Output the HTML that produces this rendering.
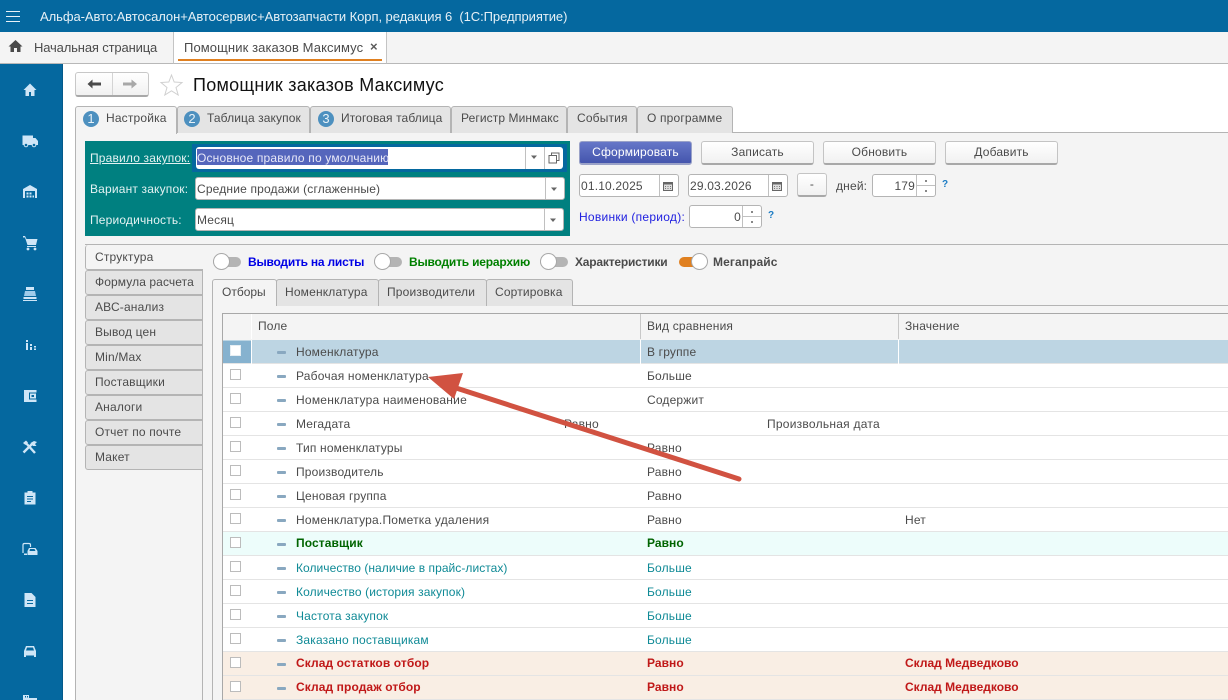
<!DOCTYPE html>
<html lang="ru"><head><meta charset="utf-8"><title>Помощник заказов Максимус</title>
<style>
html,body{margin:0;padding:0;width:1228px;height:700px;overflow:hidden;background:#fff}
body{position:relative;font:12px/16px "Liberation Sans","DejaVu Sans",sans-serif;color:#4b4b4b;letter-spacing:.17px}
div,span,svg{position:absolute;box-sizing:border-box}
.t{white-space:nowrap;height:16px}
.tab{background:#e4e4e4;border:1px solid #b4b4b4;border-bottom:0;border-radius:3px 3px 0 0;top:106px;height:27px}
.ac{background:#f4f4f4}
.num{width:16px;height:16px;border-radius:50%;background:#4d90bf;color:#e8f2f8;font-size:13px;text-align:center;line-height:16px;top:111px;letter-spacing:0}
.st{left:85px;width:118px;height:25px;background:#e4e4e4;border:1px solid #b4b4b4;border-radius:3px 0 0 3px}
.it{top:279px;height:27px;background:#e4e4e4;border:1px solid #b4b4b4;border-bottom:0;border-radius:3px 3px 0 0}
.btn{top:141px;height:24px;width:113px;border:1px solid #c4c4c4;border-bottom:2px solid #a8a8a8;border-radius:3px;background:linear-gradient(#fff,#f1f1f1);text-align:center;line-height:21px;color:#4b4b4b}
.f{background:#fff;border:1px solid #b4b4b4;border-radius:3px}
.row{left:223px;width:1005px;height:24px;border-bottom:1px solid #e4e4e4;background:#fff}
.cb{left:230px;width:11px;height:11px;border:1px solid #bcbcbc;background:#fff}
.dash{left:277px;width:9px;height:3px;border-radius:1px;background:#89a8c0}
.sw{width:28px;height:10px;border-radius:5px;background:#b4b4b4;top:257px}
.kn{width:17px;height:17px;border-radius:50%;background:#fff;border:1px solid #a8a8a8;top:253px}
.b{font-weight:bold}
.r{letter-spacing:.05px}
.ic{left:20px;width:20px;height:20px}
.top{font-size:13px;letter-spacing:0}
.tt{letter-spacing:.1px}
</style></head><body>

<div style="left:0;top:0;width:1228px;height:32px;background:#05689f"></div>
<div style="left:6px;top:11px;width:14px;height:1px;background:#e8f2f8"></div>
<div style="left:6px;top:16px;width:14px;height:1px;background:#e8f2f8"></div>
<div style="left:6px;top:21px;width:14px;height:1px;background:#e8f2f8"></div>
<div class="t top" style="left:40px;top:9px;color:#e6f0f6;white-space:pre;letter-spacing:-.06px">Альфа-Авто:Автосалон+Автосервис+Автозапчасти Корп, редакция 6  (1С:Предприятие)</div>

<div style="left:0;top:32px;width:1228px;height:32px;background:#f4f4f4;border-bottom:1px solid #b8b8b8"></div>
<svg style="left:8px;top:39px" width="15" height="14" viewBox="0 0 15 14"><path d="M7.500 1 L0.500 7.500 H2.500 V13 H6 V9 H9 V13 H12.500 V7.500 H14.500 Z" fill="#4a4a4a"/></svg>
<div class="t top" style="left:34px;top:40px;letter-spacing:-.15px">Начальная страница</div>
<div style="left:173px;top:32px;width:214px;height:32px;background:#fff;border-left:1px solid #c4c4c4;border-right:1px solid #c4c4c4;border-bottom:1px solid #b8b8b8"></div>
<div class="t top" style="left:184px;top:40px;letter-spacing:.1px">Помощник заказов Максимус</div>
<div class="t b" style="left:370px;top:39px;font-size:13px;color:#5a5a5a">×</div>
<div style="left:178px;top:59px;width:204px;height:2px;background:#e08020"></div>

<div style="left:0;top:64px;width:63px;height:636px;background:#05689f;border-right:1px solid #045a8a"></div>
<svg class="ic" style="top:80px" viewBox="0 0 20 20"><path d="M10 3.500 L3.500 10 H5.500 V16 H9 V12 H11 V16 H14.500 V10 H16.500 Z" fill="#cfe6f7"/></svg>
<svg class="ic" style="top:131px" viewBox="0 0 20 20"><path d="M2.500 4.500 H13 V7 H15.500 L18 10 V14 H2.500 Z" fill="#cfe6f7"/><circle cx="6" cy="14" r="1.800" fill="#05689f" stroke="#cfe6f7"/><circle cx="14" cy="14" r="1.800" fill="#05689f" stroke="#cfe6f7"/></svg>
<svg class="ic" style="top:182px" viewBox="0 0 20 20"><path d="M3 7 L10 3 L17 7 V16 H15 V9 H5 V16 H3 Z" fill="#cfe6f7"/><path d="M6.500 10.500h2v2h-2zM9.500 10.500h2v2h-2zM6.500 13.500h2v2h-2zM9.500 13.500h2v2h-2zM12.500 13.500h1.500v2h-1.500z" fill="#cfe6f7"/></svg>
<svg class="ic" style="top:233px" viewBox="0 0 20 20"><path d="M3 3 H5 L6.500 6 H17.500 L16 12 H7.500 L5 4.500 H3 Z" fill="#cfe6f7"/><path d="M7 13.500H16" stroke="#cfe6f7"/><circle cx="8" cy="16" r="1.400" fill="#cfe6f7"/><circle cx="15" cy="16" r="1.400" fill="#cfe6f7"/></svg>
<svg class="ic" style="top:284px" viewBox="0 0 20 20"><path d="M6 3H14V6H6Z" fill="#cfe6f7"/><path d="M5 7H15L16 12H4Z" fill="#9dcbea"/><path d="M3.500 13H16.500V15H3.500ZM3 16H17V17H3Z" fill="#cfe6f7"/></svg>
<svg class="ic" style="top:335px" viewBox="0 0 20 20"><path d="M6 5h2v2H6zM6 8h2v7H6zM10 9h2v2h-2zM10 12h2v3h-2zM14 11h2v1.500h-2zM14 13.500h2V15h-2z" fill="#cfe6f7"/></svg>
<svg class="ic" style="top:386px" viewBox="0 0 20 20"><path d="M4 4H16.500V16H4Z" fill="#cfe6f7"/><path d="M9 6.500H16.500V13.500H9Z" fill="#05689f"/><path d="M10 7.500H16V12.500H10Z" fill="#cfe6f7"/><path d="M11.500 9h2.500v2h-2.500z" fill="#05689f"/></svg>
<svg class="ic" style="top:437px" viewBox="0 0 20 20"><path d="M5 5 L15 16" stroke="#cfe6f7" stroke-width="2.400" fill="none"/><path d="M3.500 15.500 L12 7" stroke="#cfe6f7" stroke-width="2.400" fill="none"/><path d="M10.500 6 L14 4 L17 5 L15 7 L16.500 9 L13 9 Z" fill="#cfe6f7"/><path d="M3 6 L6 3.500 L8 5.500 L5.500 8 Z" fill="#cfe6f7"/></svg>
<svg class="ic" style="top:488px" viewBox="0 0 20 20"><path d="M4.500 4.500H7.500V3H12.500V4.500H15.500V16.500H4.500Z" fill="#cfe6f7"/><path d="M7 8.500H13M7 11H13M7 13.500H11" stroke="#05689f"/></svg>
<svg class="ic" style="top:539px" viewBox="0 0 20 20"><path d="M3 14 V6 Q3 4.500 4.500 4.500 H9 Q10.500 4.500 10.500 6 V8" fill="none" stroke="#cfe6f7" stroke-width="1.200"/><path d="M4 14.500h3v1.500h-3z" fill="#cfe6f7"/><path d="M9 9 H15.500 L17.500 12 V16 H7.500 V12 Z" fill="#cfe6f7"/><path d="M10 10 H14.500 L15.500 12 H9.500 Z" fill="#05689f"/></svg>
<svg class="ic" style="top:590px" viewBox="0 0 20 20"><path d="M4.500 3 H11.500 L15.500 7 V17 H4.500 Z" fill="#cfe6f7"/><path d="M7 10.500H13M7 13.500H13" stroke="#05689f"/></svg>
<svg class="ic" style="top:641px" viewBox="0 0 20 20"><path d="M6 5 H14 L16 10 V16 H14 V14.500 H6 V16 H4 V10 Z" fill="#cfe6f7"/><path d="M7 6.500H13L14 9.500H6Z" fill="#05689f"/></svg>
<svg class="ic" style="top:692px" viewBox="0 0 20 20"><path d="M3 3H9V6H17V20H3Z" fill="#cfe6f7"/><path d="M5 4h1v1.500H5zM7 4h1v1.500H7z" fill="#05689f"/></svg>

<div style="left:75px;top:72px;width:74px;height:25px;border:1px solid #c8c8c8;border-bottom:2px solid #a8a8a8;border-radius:3px;background:linear-gradient(#fff,#f1f1f1)"></div>
<div style="left:112px;top:73px;width:1px;height:22px;background:#d4d4d4"></div>
<svg style="left:86px;top:78px" width="16" height="12" viewBox="0 0 16 12"><path d="M1.500 6 L6.500 1.500 V4.500 H15 V7.500 H6.500 V10.500 Z" fill="#4a4a4a"/></svg>
<svg style="left:122px;top:78px" width="16" height="12" viewBox="0 0 16 12"><path d="M15 6 L9.500 1.500 V4.500 H1 V7.500 H9.500 V10.500 Z" fill="#a8a8a8"/></svg>
<svg style="left:159px;top:73px" width="25" height="24" viewBox="0 0 25 24"><path d="M12.500 2 L15.200 9 L23 9.500 L17 14.500 L19.200 22 L12.500 17.800 L5.800 22 L8 14.500 L2 9.500 L9.800 9 Z" fill="#fff" stroke="#d0d0d0"/></svg>
<div class="t" style="left:193px;top:74px;font-size:18px;line-height:22px;height:22px;color:#111;letter-spacing:.25px">Помощник заказов Максимус</div>

<div style="left:75px;top:132px;width:1153px;height:568px;background:#f4f4f4;border-left:1px solid #b4b4b4;border-top:1px solid #b4b4b4"></div>
<div class="tab ac" style="left:75px;width:102px;height:28px"></div>
<div class="tab" style="left:177px;width:133px"></div>
<div class="tab" style="left:310px;width:141px"></div>
<div class="tab" style="left:451px;width:116px"></div>
<div class="tab" style="left:567px;width:70px"></div>
<div class="tab" style="left:637px;width:96px"></div>
<div class="num" style="left:83px">1</div><div class="t" style="left:106px;top:110px">Настройка</div>
<div class="num" style="left:184px">2</div><div class="t tt" style="left:207px;top:110px">Таблица закупок</div>
<div class="num" style="left:318px">3</div><div class="t tt" style="left:341px;top:110px">Итоговая таблица</div>
<div class="t tt" style="left:461px;top:110px">Регистр Минмакс</div>
<div class="t" style="left:577px;top:110px">События</div>
<div class="t" style="left:647px;top:110px">О программе</div>

<div style="left:85px;top:141px;width:485px;height:95px;background:#008080"></div>
<div class="t" style="left:90px;top:150px;color:#e4f2f2;text-decoration:underline">Правило закупок:</div>
<div class="t" style="left:90px;top:181px;color:#e4f2f2">Вариант закупок:</div>
<div class="t" style="left:90px;top:212px;color:#e4f2f2">Периодичность:</div>

<div style="left:192px;top:144px;width:375px;height:28px;background:#05689f"></div>
<div class="f" style="left:196px;top:147px;width:367px;height:22px;border:0"></div>
<div style="left:197px;top:149px;width:191px;height:16px;background:#5566bc"></div>
<div class="t" style="left:197px;top:150px;color:#e8e8f8">Основное правило по умолчанию</div>
<div style="left:525px;top:147px;width:1px;height:22px;background:#c0c0c0"></div>
<div style="left:544px;top:147px;width:1px;height:22px;background:#c0c0c0"></div>
<svg style="left:530px;top:155px" width="8" height="5" viewBox="0 0 8 5"><path d="M1 0.500H7L4 4Z" fill="#666"/></svg>
<svg style="left:548px;top:152px" width="12" height="12" viewBox="0 0 12 12"><path d="M3.500 3V1H11V8.500H8.500M1 3.500H8.500V11H1Z" fill="none" stroke="#666"/></svg>

<div class="f" style="left:195px;top:177px;width:370px;height:23px"></div>
<div class="t" style="left:197px;top:181px">Средние продажи (сглаженные)</div>
<div style="left:545px;top:178px;width:1px;height:21px;background:#c0c0c0"></div>
<svg style="left:550px;top:187px" width="8" height="5" viewBox="0 0 8 5"><path d="M1 0.500H7L4 4Z" fill="#666"/></svg>

<div class="f" style="left:195px;top:208px;width:369px;height:23px"></div>
<div class="t" style="left:197px;top:212px">Месяц</div>
<div style="left:544px;top:209px;width:1px;height:21px;background:#c0c0c0"></div>
<svg style="left:549px;top:218px" width="8" height="5" viewBox="0 0 8 5"><path d="M1 0.500H7L4 4Z" fill="#666"/></svg>

<div class="btn" style="left:579px;background:linear-gradient(#6677c8,#4455ad);border-color:#9aa2c8;color:#fff">Сформировать</div>
<div class="btn" style="left:701px">Записать</div>
<div class="btn" style="left:823px">Обновить</div>
<div class="btn" style="left:945px">Добавить</div>

<div class="f" style="left:579px;top:174px;width:100px;height:23px"></div>
<div style="left:659px;top:175px;width:1px;height:21px;background:#c0c0c0"></div>
<div class="t" style="left:581px;top:178px">01.10.2025</div>
<svg style="left:663px;top:181px" width="10" height="10" viewBox="0 0 10 10"><path d="M0.500 1.500H9.500V9.500H0.500Z" fill="#ddd" stroke="#666"/><path d="M0.500 1H9.500V3.500H0.500Z" fill="#666"/><path d="M2 5h1v1H2zM4.500 5h1v1h-1zM7 5h1v1H7zM2 7h1v1H2zM4.500 7h1v1h-1zM7 7h1v1H7z" fill="#777"/></svg>
<div class="f" style="left:688px;top:174px;width:100px;height:23px"></div>
<div style="left:768px;top:175px;width:1px;height:21px;background:#c0c0c0"></div>
<div class="t" style="left:690px;top:178px">29.03.2026</div>
<svg style="left:772px;top:181px" width="10" height="10" viewBox="0 0 10 10"><path d="M0.500 1.500H9.500V9.500H0.500Z" fill="#ddd" stroke="#666"/><path d="M0.500 1H9.500V3.500H0.500Z" fill="#666"/><path d="M2 5h1v1H2zM4.500 5h1v1h-1zM7 5h1v1H7zM2 7h1v1H2zM4.500 7h1v1h-1zM7 7h1v1H7z" fill="#777"/></svg>
<div class="btn" style="left:797px;top:173px;width:30px">-</div>
<div class="t" style="left:836px;top:178px">дней:</div>
<div class="f" style="left:872px;top:174px;width:64px;height:23px"></div>
<div class="t" style="left:891px;top:178px;width:24px;text-align:right">179</div>
<div style="left:916px;top:175px;width:1px;height:21px;background:#c0c0c0"></div>
<div style="left:917px;top:185px;width:18px;height:1px;background:#c0c0c0"></div>
<div style="left:925px;top:180px;width:2px;height:2px;background:#888"></div>
<div style="left:925px;top:190px;width:2px;height:2px;background:#888"></div>
<div class="t b" style="left:942px;top:177px;color:#1c7cc4;font-size:10px">?</div>

<div class="t" style="left:579px;top:209px;color:#2020e0;letter-spacing:.26px">Новинки (период):</div>
<div class="f" style="left:689px;top:205px;width:73px;height:23px"></div>
<div class="t" style="left:717px;top:209px;width:24px;text-align:right">0</div>
<div style="left:742px;top:206px;width:1px;height:21px;background:#c0c0c0"></div>
<div style="left:743px;top:216px;width:18px;height:1px;background:#c0c0c0"></div>
<div style="left:751px;top:211px;width:2px;height:2px;background:#888"></div>
<div style="left:751px;top:221px;width:2px;height:2px;background:#888"></div>
<div class="t b" style="left:768px;top:208px;color:#1c7cc4;font-size:10px">?</div>

<div style="left:85px;top:244px;width:1143px;height:1px;background:#b4b4b4"></div>
<div style="left:202px;top:245px;width:1px;height:455px;background:#b4b4b4"></div>
<div class="st" style="top:245px;background:#f4f4f4;border-top:0;border-right:0"></div>
<div class="t" style="left:95px;top:249px">Структура</div>
<div class="st" style="top:270px"></div><div class="t tt" style="left:95px;top:274px">Формула расчета</div>
<div class="st" style="top:295px"></div><div class="t" style="left:95px;top:299px">АВС-анализ</div>
<div class="st" style="top:320px"></div><div class="t" style="left:95px;top:324px">Вывод цен</div>
<div class="st" style="top:345px"></div><div class="t" style="left:95px;top:349px">Min/Max</div>
<div class="st" style="top:370px"></div><div class="t" style="left:95px;top:374px">Поставщики</div>
<div class="st" style="top:395px"></div><div class="t" style="left:95px;top:399px">Аналоги</div>
<div class="st" style="top:420px"></div><div class="t" style="left:95px;top:424px">Отчет по почте</div>
<div class="st" style="top:445px"></div><div class="t" style="left:95px;top:449px">Макет</div>

<div class="sw" style="left:213px"></div><div class="kn" style="left:213px"></div>
<div class="t b" style="left:248px;top:254px;color:#0000e6;letter-spacing:-.22px">Выводить на листы</div>
<div class="sw" style="left:374px"></div><div class="kn" style="left:374px"></div>
<div class="t b" style="left:409px;top:254px;color:#008000;letter-spacing:-.2px">Выводить иерархию</div>
<div class="sw" style="left:540px"></div><div class="kn" style="left:540px"></div>
<div class="t b" style="left:575px;top:254px;letter-spacing:-.2px">Характеристики</div>
<div class="sw" style="left:679px;background:#e08020"></div><div class="kn" style="left:691px"></div>
<div class="t b" style="left:713px;top:254px;letter-spacing:.1px">Мегапрайс</div>

<div style="left:212px;top:305px;width:1016px;height:1px;background:#b4b4b4"></div>
<div style="left:212px;top:305px;width:1px;height:395px;background:#b4b4b4"></div>
<div class="it" style="left:212px;width:65px;background:#f4f4f4"></div>
<div class="it" style="left:276px;width:103px"></div>
<div class="it" style="left:378px;width:109px"></div>
<div class="it" style="left:486px;width:87px"></div>
<div class="t" style="left:222px;top:284px;letter-spacing:0">Отборы</div>
<div class="t" style="left:285px;top:284px">Номенклатура</div>
<div class="t" style="left:387px;top:284px">Производители</div>
<div class="t" style="left:495px;top:284px">Сортировка</div>

<div style="left:222px;top:313px;width:1006px;height:387px;background:#fff;border-left:1px solid #a8a8a8;border-top:1px solid #a8a8a8"></div>
<div style="left:223px;top:314px;width:1005px;height:26px;background:#f4f4f4"></div>
<div style="left:251px;top:314px;width:1px;height:25px;background:#fff"></div>
<div style="left:640px;top:314px;width:1px;height:25px;background:#c8c8c8"></div>
<div style="left:898px;top:314px;width:1px;height:25px;background:#c8c8c8"></div>
<div class="t" style="left:258px;top:318px">Поле</div>
<div class="t" style="left:647px;top:318px">Вид сравнения</div>
<div class="t" style="left:905px;top:318px">Значение</div>

<div class="row" style="top:340px;background:#bdd5e3"></div>
<div style="left:223px;top:341px;width:28px;height:22px;background:#86b2cf"></div>
<div style="left:251px;top:340px;width:1px;height:24px;background:#fff"></div>
<div style="left:640px;top:340px;width:1px;height:24px;background:#fff"></div>
<div style="left:898px;top:340px;width:1px;height:24px;background:#fff"></div>
<div class="row" style="top:364px"></div>
<div class="row" style="top:388px"></div>
<div class="row" style="top:412px"></div>
<div class="row" style="top:436px"></div>
<div class="row" style="top:460px"></div>
<div class="row" style="top:484px"></div>
<div class="row" style="top:508px"></div>
<div class="row" style="top:532px;background:#edfdfb"></div>
<div class="row" style="top:556px"></div>
<div class="row" style="top:580px"></div>
<div class="row" style="top:604px"></div>
<div class="row" style="top:628px"></div>
<div class="row" style="top:652px;background:#f9eee4"></div>
<div class="row" style="top:676px;background:#f9eee4"></div>

<div class="cb" style="top:345px;border-color:#e6eef3"></div><div class="dash" style="top:351px"></div>
<div class="cb" style="top:369px"></div><div class="dash" style="top:375px"></div>
<div class="cb" style="top:393px"></div><div class="dash" style="top:399px"></div>
<div class="cb" style="top:417px"></div><div class="dash" style="top:423px"></div>
<div class="cb" style="top:441px"></div><div class="dash" style="top:447px"></div>
<div class="cb" style="top:465px"></div><div class="dash" style="top:471px"></div>
<div class="cb" style="top:489px"></div><div class="dash" style="top:495px"></div>
<div class="cb" style="top:513px"></div><div class="dash" style="top:519px"></div>
<div class="cb" style="top:537px"></div><div class="dash" style="top:543px"></div>
<div class="cb" style="top:561px"></div><div class="dash" style="top:567px"></div>
<div class="cb" style="top:585px"></div><div class="dash" style="top:591px"></div>
<div class="cb" style="top:609px"></div><div class="dash" style="top:615px"></div>
<div class="cb" style="top:633px"></div><div class="dash" style="top:639px"></div>
<div class="cb" style="top:657px"></div><div class="dash" style="top:663px"></div>
<div class="cb" style="top:681px"></div><div class="dash" style="top:687px"></div>

<div class="t" style="left:296px;top:344px">Номенклатура</div><div class="t" style="left:647px;top:344px">В группе</div>
<div class="t" style="left:296px;top:368px;letter-spacing:.2px">Рабочая номенклатура</div><div class="t" style="left:647px;top:368px">Больше</div>
<div class="t" style="left:296px;top:392px;letter-spacing:.24px">Номенклатура наименование</div><div class="t" style="left:647px;top:392px">Содержит</div>
<div class="t" style="left:296px;top:416px">Мегадата</div><div class="t" style="left:564px;top:416px">Равно</div><div class="t" style="left:767px;top:416px;letter-spacing:.25px">Произвольная дата</div>
<div class="t" style="left:296px;top:440px">Тип номенклатуры</div><div class="t" style="left:647px;top:440px">Равно</div>
<div class="t" style="left:296px;top:464px">Производитель</div><div class="t" style="left:647px;top:464px">Равно</div>
<div class="t" style="left:296px;top:488px">Ценовая группа</div><div class="t" style="left:647px;top:488px">Равно</div>
<div class="t" style="left:296px;top:512px;letter-spacing:.2px">Номенклатура.Пометка удаления</div><div class="t" style="left:647px;top:512px">Равно</div><div class="t" style="left:905px;top:512px">Нет</div>
<div class="t b" style="left:296px;top:535px;color:#006400;letter-spacing:.1px">Поставщик</div><div class="t b r" style="left:647px;top:535px;color:#006400">Равно</div>
<div class="t" style="left:296px;top:560px;color:#0f8a96;letter-spacing:.05px">Количество (наличие в прайс-листах)</div><div class="t" style="left:647px;top:560px;color:#0f8a96">Больше</div>
<div class="t" style="left:296px;top:584px;color:#0f8a96;letter-spacing:.12px">Количество (история закупок)</div><div class="t" style="left:647px;top:584px;color:#0f8a96">Больше</div>
<div class="t" style="left:296px;top:608px;color:#0f8a96">Частота закупок</div><div class="t" style="left:647px;top:608px;color:#0f8a96">Больше</div>
<div class="t" style="left:296px;top:632px;color:#0f8a96">Заказано поставщикам</div><div class="t" style="left:647px;top:632px;color:#0f8a96">Больше</div>
<div class="t b" style="left:296px;top:655px;color:#c01818;letter-spacing:.1px">Склад остатков отбор</div><div class="t b r" style="left:647px;top:655px;color:#c01818">Равно</div><div class="t b" style="left:905px;top:655px;color:#c01818;letter-spacing:0">Склад Медведково</div>
<div class="t b" style="left:296px;top:679px;color:#c01818;letter-spacing:.1px">Склад продаж отбор</div><div class="t b r" style="left:647px;top:679px;color:#c01818">Равно</div><div class="t b" style="left:905px;top:679px;color:#c01818;letter-spacing:0">Склад Медведково</div>

<svg style="left:0;top:0" width="1228" height="700" viewBox="0 0 1228 700"><path d="M453 387 L739 479" stroke="#d15241" stroke-width="5" stroke-linecap="round" fill="none"/><path d="M428 377 L463 373 L454 399 Z" fill="#d15241"/></svg>
</body></html>
